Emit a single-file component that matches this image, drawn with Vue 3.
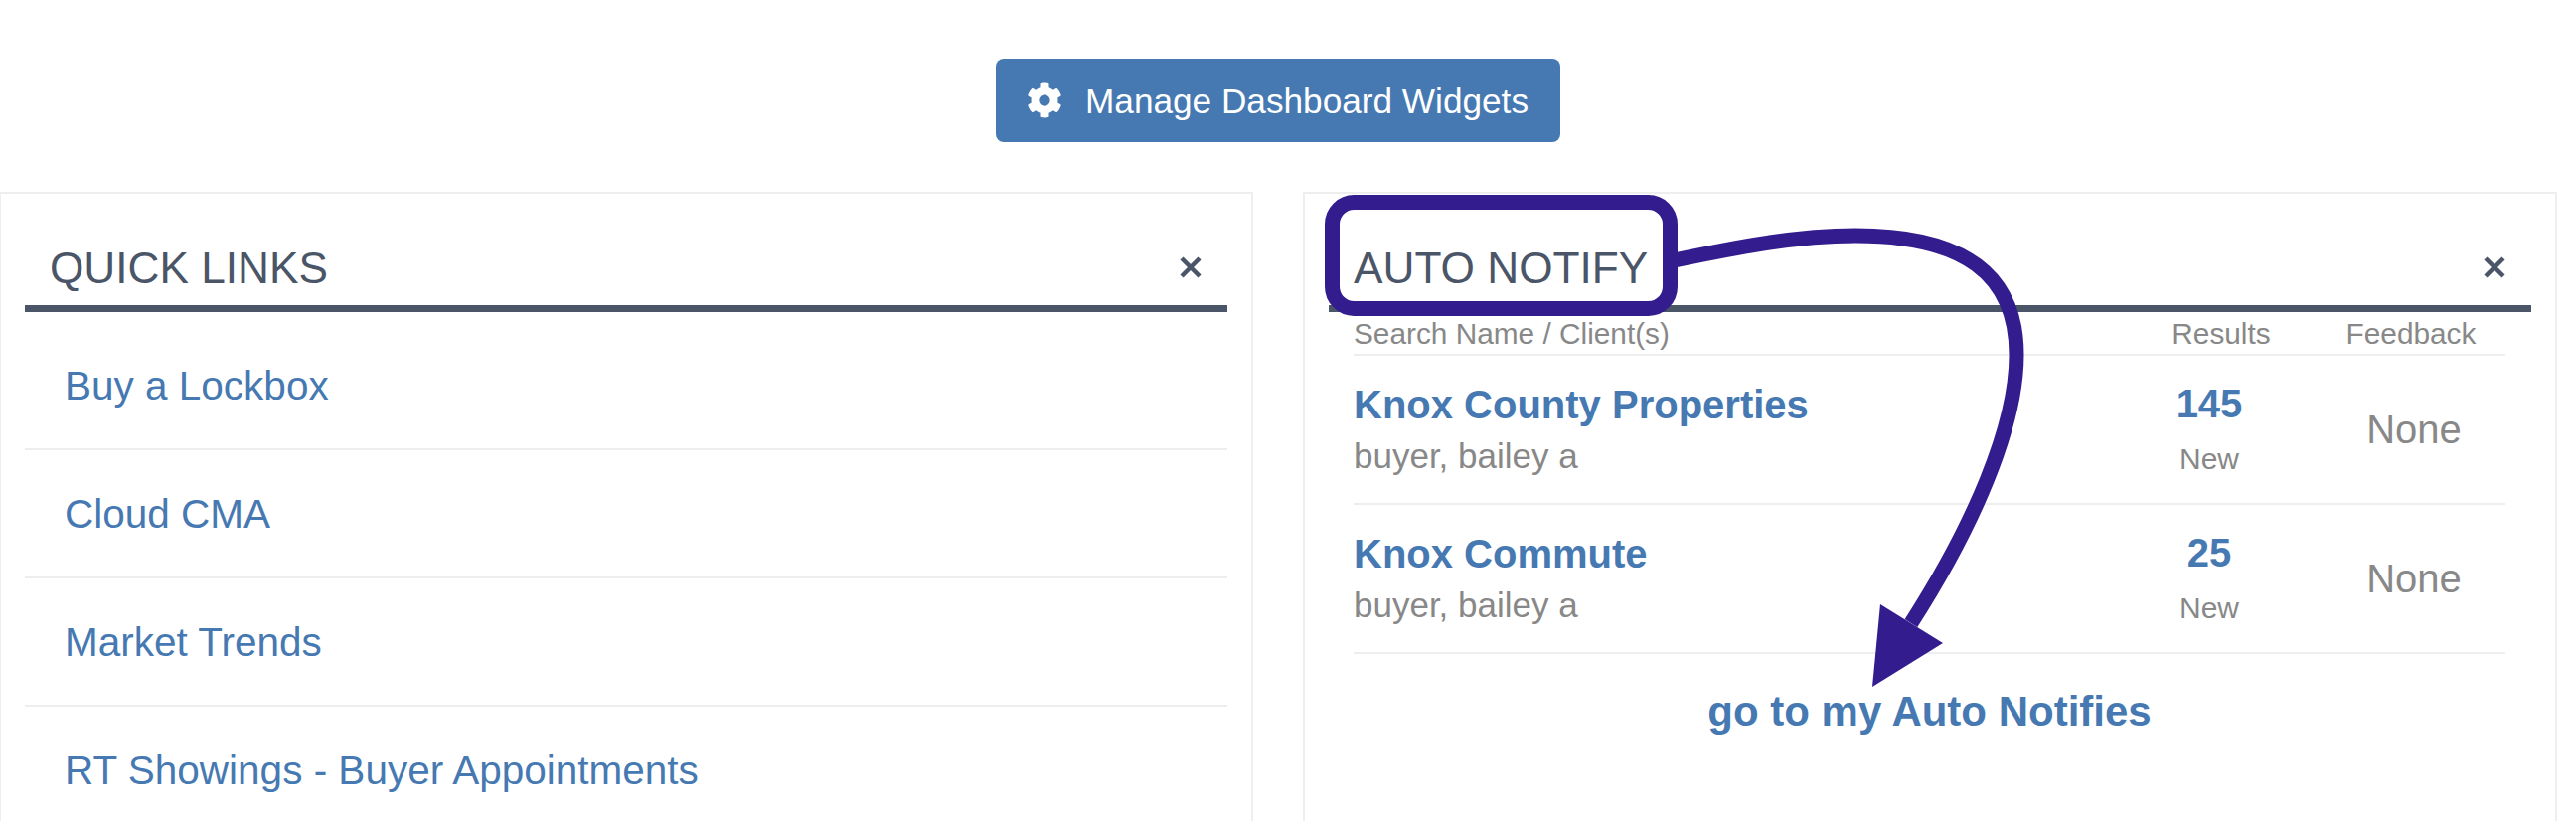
<template>
  <div class="page">
    <div class="top">
      <button class="manage-btn">
        <svg class="gear" viewBox="0 0 512 512"><path fill="#fff" d="M487.4 315.7l-42.6-24.6c4.3-23.2 4.3-47 0-70.2l42.6-24.6c4.9-2.8 7.1-8.6 5.5-14-11.1-35.6-30-67.8-54.7-94.6-3.8-4.1-10-5.1-14.8-2.3L380.8 110c-17.9-15.4-38.5-27.3-60.8-35.1V25.8c0-5.6-3.9-10.5-9.4-11.7-36.7-8.2-74.3-7.8-109.2 0-5.5 1.2-9.4 6.1-9.4 11.7V75c-22.2 7.9-42.8 19.8-60.8 35.1L88.7 85.5c-4.9-2.8-11-1.9-14.8 2.3-24.7 26.7-43.6 58.9-54.7 94.6-1.7 5.4.6 11.2 5.5 14L67.3 221c-4.3 23.2-4.3 47 0 70.2l-42.6 24.6c-4.9 2.8-7.1 8.6-5.5 14 11.1 35.6 30 67.8 54.7 94.6 3.8 4.1 10 5.1 14.8 2.3l42.6-24.6c17.9 15.4 38.5 27.3 60.8 35.1v49.2c0 5.6 3.9 10.5 9.4 11.7 36.7 8.2 74.3 7.8 109.2 0 5.5-1.2 9.4-6.1 9.4-11.7v-49.2c22.2-7.9 42.8-19.8 60.8-35.1l42.6 24.6c4.9 2.8 11 1.9 14.8-2.3 24.7-26.7 43.6-58.9 54.7-94.6 1.5-5.5-.7-11.3-5.6-14.1zM256 336c-44.1 0-80-35.9-80-80s35.9-80 80-80 80 35.9 80 80-35.9 80-80 80z"/></svg>
        <span class="btn-label">Manage Dashboard Widgets</span>
      </button>
    </div>

    <div class="panels">
      <section class="panel">
        <header class="panel-head">
          <h2>QUICK LINKS</h2>
          <svg class="close" viewBox="0 0 22 22"><path d="M2 2 L20 20 M20 2 L2 20" /></svg>
        </header>
        <ul class="links">
          <li v-for="l in links" :key="l"><a>{{ l }}</a></li>
        </ul>
      </section>

      <section class="panel">
        <header class="panel-head">
          <h2>AUTO NOTIFY</h2>
          <svg class="close" viewBox="0 0 22 22"><path d="M2 2 L20 20 M20 2 L2 20" /></svg>
        </header>
        <div class="table">
          <div class="thead">
            <span>Search Name / Client(s)</span>
            <span class="th-results">Results</span>
            <span class="th-feedback">Feedback</span>
          </div>
          <div v-for="r in rows" :key="r.name" class="row">
            <div>
              <a class="name">{{ r.name }}</a>
              <div class="client">{{ r.client }}</div>
            </div>
            <div class="results">
              <a class="count">{{ r.count }}</a>
              <div class="new">New</div>
            </div>
            <div class="feedback">None</div>
          </div>
          <a class="goto">go to my Auto Notifies</a>
        </div>
      </section>
    </div>

    <!-- hand drawn annotation on top of the screenshot -->
    <svg class="annotation" width="2592" height="826" viewBox="0 0 2592 826">
      <rect x="1340.5" y="203.5" width="340" height="107" rx="22" fill="none" stroke="#321c8e" stroke-width="15" />
      <path d="M1680 263 C1750 248 1810 237 1867 237 C1975 237 2029 275 2029 357 C2029 430 1985 530 1923 627" fill="none" stroke="#321c8e" stroke-width="15" />
      <path d="M1892 608 L1955 647 L1884 691 Z" fill="#321c8e" />
    </svg>
  </div>
</template>

<script setup>
const links = ["Buy a Lockbox", "Cloud CMA", "Market Trends", "RT Showings - Buyer Appointments"];
const rows = [
  { name: "Knox County Properties", client: "buyer, bailey a", count: 145 },
  { name: "Knox Commute", client: "buyer, bailey a", count: 25 },
];
</script>

<style>
html, body { margin: 0; background: #fff; overflow: hidden; }
</style>

<style scoped>
.page {
  position: relative;
  height: 826px;
  overflow: hidden;
  padding-right: 20px;
  font-family: "Liberation Sans", Arial, sans-serif;
  background: #fff;
}
.top {
  display: flex; justify-content: center;
  padding-top: 59px;
  height: 134px;
}
.manage-btn {
  display: flex; align-items: center; gap: 23px;
  height: 84px;
  padding: 0 32px 0 31px;
  background: #4679b2;
  border: none; border-radius: 8px;
  color: #fff;
  font: 35.2px "Liberation Sans", Arial, sans-serif;
}
.btn-label { padding-top: 2px; }
.gear { width: 36px; height: 36px; }
.panels {
  display: grid;
  grid-template-columns: 1262px 1262px;
  gap: 50px;
  margin-left: -1px;
}
.panel {
  height: 640px;
  border: 2px solid #eee;
  padding: 0 24px;
  box-sizing: border-box;
}
.panel-head {
  display: flex; align-items: center; justify-content: space-between;
  height: 112px;
  padding: 0 26px 0 25px;
  border-bottom: 7px solid #4a5568;
  box-sizing: content-box;
}
.panel-head h2 {
  margin: 38px 0 0;
  font-size: 44.2px; font-weight: 400; line-height: 50px;
  color: #4a5568;
}
.close {
  width: 22px; height: 22px;
  margin-top: 36px;
  fill: none; stroke: #4a5568; stroke-width: 4.5;
}
.links { list-style: none; margin: 0; padding: 10px 0 0; }
.links li {
  height: 127px;
  padding: 2px 0 0 40px;
  box-sizing: content-box;
  height: 125px;
  display: flex; align-items: center;
  border-bottom: 2px solid #eee;
  font-size: 40.5px;
  color: #4679b2;
}
.table { margin: 0 26px 0 25px; color: #888; }
.thead {
  display: grid;
  grid-template-columns: 1fr 140px 216px;
  height: 42px; line-height: 43px;
  border-bottom: 2px solid #eee;
  font-size: 29.8px;
  box-sizing: content-box;
}
.th-results { text-align: center; }
.th-feedback { text-align: center; padding-left: 26px; }
.row {
  display: grid;
  grid-template-columns: 1fr 228px 184px;
  align-items: center;
  height: 148px;
  border-bottom: 2px solid #eee;
}
.name {
  display: block;
  position: relative; top: -2px;
  font-size: 40px; font-weight: 700; line-height: 48px;
  color: #4679b2;
}
.client { font-size: 35px; line-height: 40px; margin-top: 6px; }
.results { text-align: center; }
.count {
  display: block;
  font-size: 40px; font-weight: 700; line-height: 48px;
  color: #4679b2;
  margin-top: -2px;
}
.new { font-size: 30px; line-height: 36px; margin-top: 14px; }
.feedback { text-align: center; font-size: 40px; }
.goto {
  display: block;
  margin-top: 34px;
  text-align: center;
  font-size: 42px; font-weight: 700;
  color: #4679b2;
}
.annotation { position: absolute; left: 0; top: 0; pointer-events: none; }
</style>
